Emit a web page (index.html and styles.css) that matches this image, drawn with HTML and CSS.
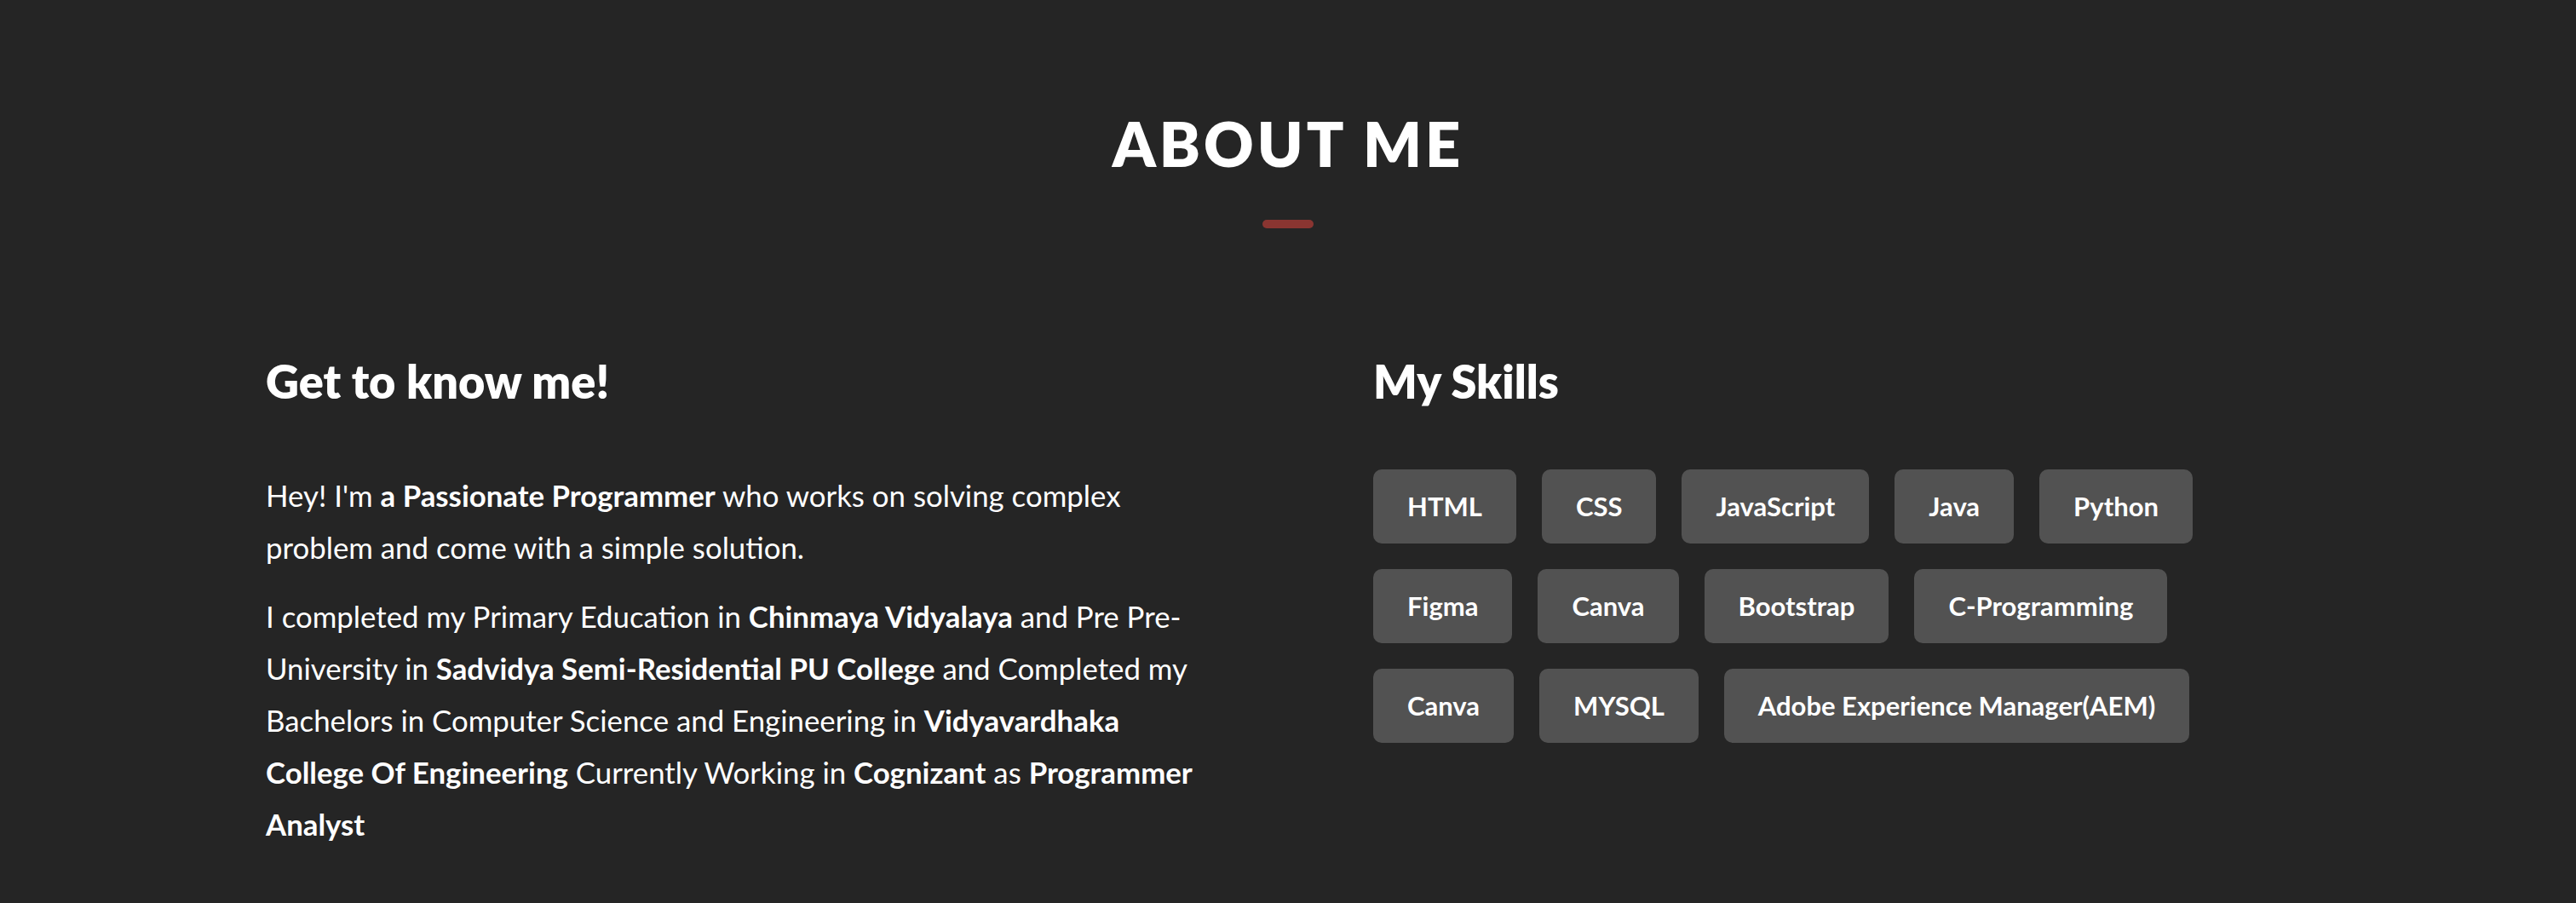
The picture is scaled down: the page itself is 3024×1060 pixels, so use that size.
FILE: index.html
```html
<!DOCTYPE html>
<html lang="en">
<head>
<meta charset="utf-8">
<title>About Me</title>
<link rel="stylesheet" href="styles.css">
</head>
<body>
<section class="about">
  <header class="about-head">
    <h2 class="about-title">ABOUT ME</h2>
    <div class="about-bar"></div>
  </header>
  <div class="about-content">
    <div class="about-col">
      <h3 class="col-title">Get to know me!</h3>
      <p class="about-text">Hey! I'm <strong>a Passionate Programmer</strong> who works on solving complex problem and come with a simple solution.</p>
      <p class="about-text">I completed my Primary Education in <strong>Chinmaya Vidyalaya</strong> and Pre Pre-University in <strong>Sadvidya Semi-Residential PU College</strong> and Completed my Bachelors in Computer Science and Engineering in <strong>Vidyavardhaka College Of Engineering</strong> Currently Working in <strong>Cognizant</strong> as <strong>Programmer Analyst</strong></p>
    </div>
    <div class="about-col">
      <h3 class="col-title">My Skills</h3>
      <div class="skills">
        <span class="skill">HTML</span>
        <span class="skill">CSS</span>
        <span class="skill">JavaScript</span>
        <span class="skill">Java</span>
        <span class="skill">Python</span>
        <span class="skill">Figma</span>
        <span class="skill">Canva</span>
        <span class="skill">Bootstrap</span>
        <span class="skill">C-Programming</span>
        <span class="skill">Canva</span>
        <span class="skill">MYSQL</span>
        <span class="skill">Adobe Experience Manager(AEM)</span>
      </div>
    </div>
  </div>
</section>
</body>
</html>
```
FILE: styles.css
```css
* { box-sizing: border-box; }

html, body {
  margin: 0;
  padding: 0;
  background: #252525;
}

body {
  font-family: "Lato", "Open Sans", sans-serif;
  color: #fff;
  min-height: 1060px;
}

.about {
  padding-top: 125px;
}

.about-head {
  display: flex;
  flex-direction: column;
  align-items: center;
}

.about-title {
  margin: 0;
  font-size: 72px;
  line-height: 86px;
  font-weight: 800;
  letter-spacing: 4px;
  color: #fff;
}

.about-bar {
  width: 60px;
  height: 10px;
  margin-top: 47px;
  border-radius: 5px;
  background: #8a3531;
}

.about-content {
  width: 2400px;
  margin: 147px auto 0;
  display: grid;
  grid-template-columns: 1fr 1fr;
  column-gap: 200px;
}

.col-title {
  margin: 0 0 71px;
  font-size: 54px;
  line-height: 65px;
  font-weight: 800;
  color: #fff;
}

.about-text {
  margin: 0 0 20px;
  font-size: 34.8px;
  line-height: 61px;
  font-weight: 400;
  color: #fff;
}

.about-text strong {
  font-weight: 700;
}

.skills {
  display: flex;
  flex-wrap: wrap;
  gap: 30px;
}

.skill {
  display: inline-block;
  padding: 16px 40px;
  font-size: 31px;
  line-height: 55px;
  font-weight: 700;
  color: #fff;
  background: #525252;
  border-radius: 10px;
}
```
